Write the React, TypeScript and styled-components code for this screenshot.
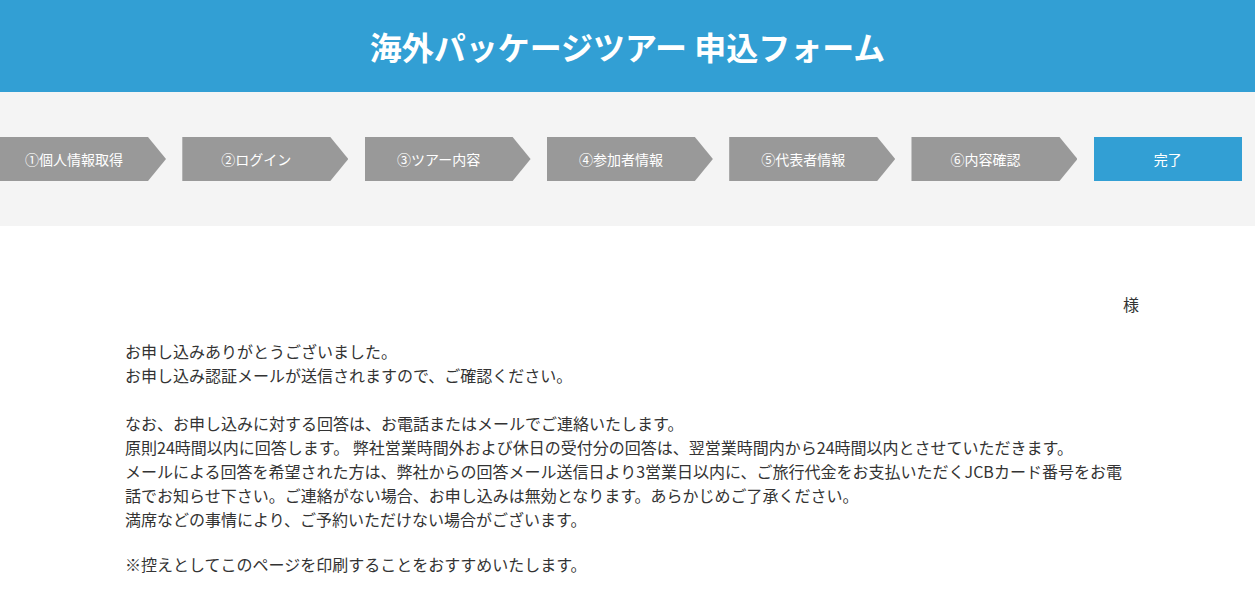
import React from "react";
import styled, { createGlobalStyle } from "styled-components";

const Global = createGlobalStyle`
  html, body { margin: 0; padding: 0; background: #fff; }
  body { font-family: "Noto Sans CJK JP", "Noto Sans", sans-serif; color: #333; }
`;

const Header = styled.header`
  background: #329fd4;
  height: 92px;
  display: flex;
  align-items: center;
  justify-content: center;
`;

const Title = styled.h1`
  margin: 0;
  color: #fff;
  font-size: 32px;
  font-weight: 700;
  letter-spacing: 0;
`;

const StepBand = styled.div`
  background: #f4f4f4;
  padding: 45px 0 45px;
`;

const StepList = styled.ol`
  list-style: none;
  margin: 0;
  padding: 0;
  display: flex;
  gap: 16.3px;
`;

const Step = styled.li<{ $current?: boolean; $last?: boolean }>`
  flex: 0 0 auto;
  width: ${(p) => (p.$last ? "148px" : "166px")};
  height: 44px;
  box-sizing: border-box;
  padding-right: ${(p) => (p.$last ? "0" : "18px")};
  background: ${(p) => (p.$current ? "#329fd4" : "#999")};
  color: #fff;
  font-size: 14px;
  display: flex;
  align-items: center;
  justify-content: center;
  clip-path: ${(p) =>
    p.$last ? "none" : "polygon(0 0, 148px 0, 100% 50%, 148px 100%, 0 100%)"};
`;

const Content = styled.main`
  box-sizing: border-box;
  width: 1015px;
  margin: 0 auto;
  padding: 66px 0 16px 5px;
  font-size: 16px;
  line-height: 24px;
`;

const Honorific = styled.p`
  margin: 0 -4px 23px 0;
  text-align: right;
`;

const Paragraph = styled.p<{ $after?: number }>`
  margin: 0 0 ${(p) => p.$after ?? 24}px;
  padding-right: 4px;
`;

const steps = [
  "①個人情報取得",
  "②ログイン",
  "③ツアー内容",
  "④参加者情報",
  "⑤代表者情報",
  "⑥内容確認",
];

export default function App() {
  return (
    <>
      <Global />
      <Header>
        <Title>海外パッケージツアー 申込フォーム</Title>
      </Header>
      <StepBand>
        <StepList>
          {steps.map((s) => (
            <Step key={s}>{s}</Step>
          ))}
          <Step $current $last>
            完了
          </Step>
        </StepList>
      </StepBand>
      <Content>
        <Honorific>様</Honorific>
        <Paragraph>
          お申し込みありがとうございました。
          <br />
          お申し込み認証メールが送信されますので、ご確認ください。
        </Paragraph>
        <Paragraph $after={21}>
          なお、お申し込みに対する回答は、お電話またはメールでご連絡いたします。
          <br />
          原則24時間以内に回答します。 弊社営業時間外および休日の受付分の回答は、翌営業時間内から24時間以内とさせていただきます。
          <br />
          メールによる回答を希望された方は、弊社からの回答メール送信日より3営業日以内に、ご旅行代金をお支払いただくJCBカード番号をお電話でお知らせ下さい。ご連絡がない場合、お申し込みは無効となります。あらかじめご了承ください。
          <br />
          満席などの事情により、ご予約いただけない場合がございます。
        </Paragraph>
        <Paragraph $after={0}>※控えとしてこのページを印刷することをおすすめいたします。</Paragraph>
      </Content>
    </>
  );
}
